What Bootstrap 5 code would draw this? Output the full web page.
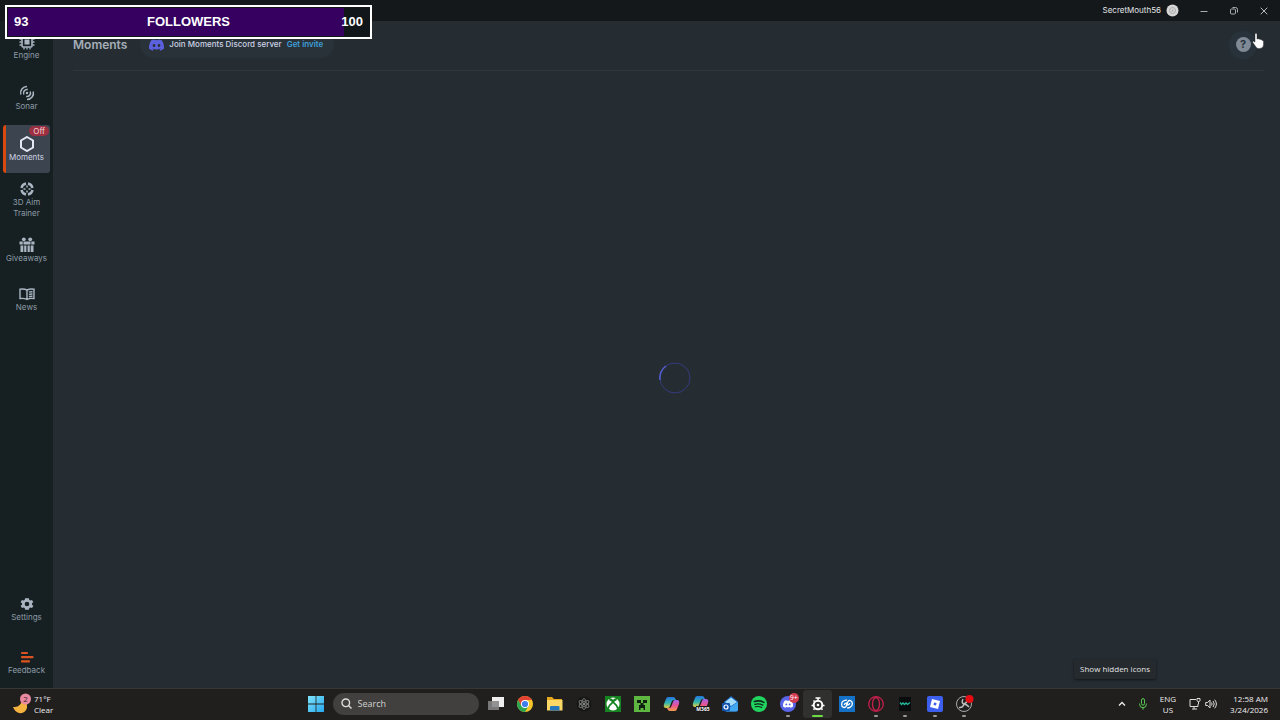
<!DOCTYPE html>
<html lang="en" data-bs-theme="dark">
<head>
<meta charset="utf-8">
<meta name="viewport" content="width=device-width, initial-scale=1">
<title>Moments</title>
<link href="https://cdn.jsdelivr.net/npm/bootstrap@5.3.0/dist/css/bootstrap.min.css" rel="stylesheet">
<style>
body{font-family:Inter,"Liberation Sans",sans-serif;background:#252d33;color:#d5d9dd;font-size:8px;line-height:11px}
button{border:0;background:none;padding:0;color:inherit}
svg{display:block;flex:none}
.titlebar{height:21px;background:#14181b;padding-right:1px}
.win-btn{width:30px;height:21px}
.account{gap:5px;margin-right:10px;color:#e2e4e6}
.sidebar{width:53px;background:#162022;padding:2px 3px;gap:3px}
.side-link{height:48px;color:#8d9aa6;text-decoration:none;text-align:center;border-radius:3px}
.side-link.compact{height:46px}
.side-link svg{color:#a9b6c2}
.side-link.active{background:#3b444f;border-left:3px solid #d9480f;color:#ced4e4;padding-right:3px}
.side-link.active svg{color:#e4e8f2}
.off-badge{top:1px;right:1px;background:#9c2f40;color:#f3d4d9;border-radius:6px;padding:0 4px;line-height:10px}
.side-end{gap:5px}
.page-head{height:50px;margin:0 16px 0 20px;padding-bottom:2px;border-bottom:1px solid #2c363f}
.page-title{font-size:12px;line-height:16px;font-weight:600;color:#a4adb7}
.invite{height:27px;border-radius:14px;background:#293139;padding:0 11px 0 9px;gap:5px;margin-left:13px;font-weight:500;color:#cdd3e4}
.invite a{color:#3f9fd6;text-decoration:none;font-weight:600}
.help{width:28px;height:28px;border-radius:50%;background:#27323b;margin-right:7px}
.help span{width:15px;height:15px;border-radius:50%;background:#808a96;color:#27313a;font-weight:700;font-size:11px;line-height:15px}
.taskbar{height:32px;padding:0 12px 2px;background:#211f1e;border-top:1px solid #363736;font-family:"Open Sans","Noto Sans",sans-serif;color:#eee}
.side-zone{flex:1 1 0}
.search{width:146px;height:22px;border-radius:11px;background:#41403e;padding:0 8px;gap:6px;margin:0 3px}
.search input{width:90px;border:0;background:none;outline:0;padding:0;color:#ddd;font-size:9px;line-height:16px}
.search input::placeholder{color:#d0d0d0;opacity:1}
.apps{display:grid;width:497px;grid-template-columns:repeat(17,1fr)}
.app-btn{height:28px;position:relative;display:flex;align-items:center;justify-content:center}
.app-btn.running::after{content:"";position:absolute;bottom:1px;width:4px;height:2px;border-radius:1px;background:#999}
.app-btn.current{background:#30302f;border-radius:3px}
.app-btn.current::after{width:11px;background:#6bdc43}
.app-count{top:3px;left:15px;width:10px;height:10px;border-radius:50%;background:#d33b50;color:#fff;font-size:7px;line-height:10px}
.tray{gap:13px}
.followers{left:5px;top:5px;width:367px;height:34px;border:2px solid #fff;background:#10161a;padding:1px;z-index:5}
.followers .progress{height:28px;border-radius:0;background:#10161a}
.followers .progress-bar{background:#35005f}
.follow-text{inset:0;padding:0 7px;display:grid;grid-template-columns:1fr auto 1fr;align-items:center;font:bold 13px/16px "Liberation Sans",Arial,sans-serif;color:#fff}
.tip{right:124px;bottom:9px;height:20px;padding:0 6px;background:#252a2e;box-shadow:0 1px 3px #0008;border-radius:2px;font-family:"Open Sans","Noto Sans",sans-serif;color:#e4e4e4;line-height:20px}
.pointer{right:16px;top:33px;z-index:6}
</style>
</head>
<body>
<div class="vh-100 d-flex flex-column position-relative overflow-hidden">
<header class="titlebar d-flex justify-content-end align-items-center">
  <div class="account d-flex align-items-center"><span>SecretMouth56</span>
    <svg width="13" height="13" viewBox="0 0 13 13"><circle cx="6.500" cy="6.500" r="6" fill="#d6d6d6"/><circle cx="6.500" cy="6.500" r="3" fill="none" stroke="#aaa"/><circle cx="6.500" cy="6.500" r="1" fill="#aaa"/></svg></div>
  <button class="win-btn d-flex align-items-center justify-content-center" aria-label="Minimize"><svg width="8" height="8" viewBox="0 0 8 8"><path d="M.5 4.500h7" stroke="#aaa"/></svg></button>
  <button class="win-btn d-flex align-items-center justify-content-center" aria-label="Restore"><svg width="8" height="8" viewBox="0 0 8 8" fill="none" stroke="#aaa"><rect x=".5" y="2" width="5" height="5" rx="1"/><path d="M2.500.5h3q2 0 2 2v3"/></svg></button>
  <button class="win-btn d-flex align-items-center justify-content-center" aria-label="Close"><svg width="8" height="8" viewBox="0 0 8 8"><path d="m.7.7 6.600 6.600m0-6.600L.7 7.300" stroke="#bbb"/></svg></button>
</header>

<div class="d-flex flex-grow-1" style="min-height:0">
<nav class="sidebar d-flex flex-column flex-shrink-0">
  <a href="#" class="side-link d-flex flex-column align-items-center justify-content-center"><svg width="16" height="16" viewBox="0 0 16 16" fill="none" stroke="currentColor"><rect x="3" y="3" width="10" height="10" rx="1" stroke-width="1.600"/><rect x="6" y="6" width="4" height="4" fill="currentColor"/><path d="M5 .5v2m3-2v2m3-2v2m-6 11v2m3-2v2m3-2v2M.5 5h2m-2 3h2m-2 3h2m11-6h2m-2 3h2m-2 3h2" stroke-width="1.300"/></svg>Engine</a>
  <a href="#" class="side-link d-flex flex-column align-items-center justify-content-center"><svg width="16" height="16" viewBox="0 0 16 16" fill="none" stroke="currentColor" stroke-width="1.500"><circle cx="8" cy="8" r="1.200" fill="currentColor" stroke="none"/><path d="M4.800 9.500a3.600 3.600 0 0 1 4-5M11.200 6.500a3.600 3.600 0 0 1-4 5M1.800 9.500A6.300 6.300 0 0 1 8 1.500M14.200 6.500A6.300 6.300 0 0 1 8 14.500"/></svg>Sonar</a>
  <a href="#" class="side-link active position-relative d-flex flex-column align-items-center justify-content-center"><svg width="16" height="16" viewBox="0 0 16 16" fill="none" stroke="currentColor" stroke-width="2"><path d="m8 1 6 3.500v7L8 15l-6-3.500v-7z"/></svg>Moments<span class="off-badge position-absolute">Off</span></a>
  <a href="#" class="side-link d-flex flex-column align-items-center justify-content-center"><svg width="16" height="16" viewBox="0 0 16 16" fill="none" stroke="currentColor"><g stroke-width="2.400"><path d="M7 2.500A5.600 5.600 0 0 0 2.500 7M9 2.500A5.600 5.600 0 0 1 13.500 7M13.500 9A5.600 5.600 0 0 1 9 13.500M7 13.500A5.600 5.600 0 0 1 2.500 9"/></g><path d="M8 4.500v2M8 9.500v2M4.500 8h2m3 0h2" stroke-width="1.500"/></svg>3D Aim<br>Trainer</a>
  <a href="#" class="side-link compact d-flex flex-column align-items-center justify-content-center"><svg width="16" height="16" viewBox="0 0 16 16" fill="currentColor"><path d="M.5 4.500h3.200v3H.5zM4.500 4.500h7v3h-7zM12.300 4.500h3.200v3h-3.200zM1.500 8.500h2.800V15H1.500zM5.200 8.500h2.200V15H5.200zM8.600 8.500h2.200V15H8.600zM11.700 8.500h2.800V15h-2.800z"/><circle cx="4.800" cy="2.300" r="1.900"/><circle cx="11.200" cy="2.300" r="1.900"/></svg>Giveaways</a>
  <a href="#" class="side-link compact d-flex flex-column align-items-center justify-content-center"><svg width="16" height="16" viewBox="0 0 16 16" fill="none" stroke="currentColor" stroke-width="1.400"><path d="M8 4Q5 2.500 1 3.200v9.300q4-.6 7 1 3-1.600 7-1V3.200Q11 2.500 8 4zm0 0v9M10 6.200q1.500-.6 3.500-.5M10 8.500q1.500-.6 3.500-.5M10 10.800q1.500-.6 3.500-.5"/></svg>News</a>
  <div class="side-end mt-auto d-flex flex-column">
  <a href="#" class="side-link d-flex flex-column align-items-center justify-content-center"><svg width="16" height="16" viewBox="0 0 24 24" fill="currentColor"><path d="M19.400 13a7.800 7.800 0 0 0 0-2l2.100-1.600-2-3.500-2.500 1a7.600 7.600 0 0 0-1.700-1L15 3.200H9l-.4 2.700a7.600 7.600 0 0 0-1.700 1l-2.500-1-2 3.500L4.600 11a7.800 7.800 0 0 0 0 2l-2.200 1.600 2 3.500 2.500-1a7.600 7.600 0 0 0 1.700 1l.4 2.700h6l.4-2.700a7.600 7.600 0 0 0 1.700-1l2.500 1 2-3.500zM12 15.500a3.500 3.500 0 1 1 0-7 3.500 3.500 0 0 1 0 7z"/></svg>Settings</a>
  <a href="#" class="side-link d-flex flex-column align-items-center justify-content-center"><svg width="16" height="16" viewBox="0 0 16 16" fill="none" stroke="#db5320" stroke-width="2.200" stroke-linecap="round"><path d="M3 4h5M3 8.200h10.500M3 12.400h7"/></svg>Feedback</a>
  </div>
</nav>

<main class="flex-grow-1 d-flex flex-column position-relative">
  <div class="page-head d-flex align-items-center">
    <h1 class="page-title m-0">Moments</h1>
    <div class="invite d-flex align-items-center"><svg width="15" height="12" viewBox="0 0 24 18" fill="#5b60dd"><path d="M20.300 1.500A20 20 0 0 0 15.400 0l-.7 1.300a18 18 0 0 0-5.400 0L8.600 0a20 20 0 0 0-4.900 1.500C.6 6.100-.3 10.600.1 15a20 20 0 0 0 6 3l1.300-2-2-1 .5-.4a14 14 0 0 0 12.200 0l.5.400-2 1 1.300 2a20 20 0 0 0 6-3c.5-5.100-.8-9.500-3.600-13.500zM8 12.300c-1.200 0-2.200-1.100-2.200-2.400S6.800 7.500 8 7.500s2.200 1.100 2.200 2.400S9.200 12.300 8 12.300zm8 0c-1.200 0-2.200-1.100-2.200-2.400s1-2.400 2.200-2.400 2.200 1.100 2.200 2.400-1 2.400-2.200 2.400z"/></svg><span>Join Moments Discord server</span><a href="#">Get invite</a></div>
    <button class="help ms-auto d-flex align-items-center justify-content-center" aria-label="Help"><span>?</span></button>
  </div>
  <div class="flex-grow-1 d-flex align-items-center justify-content-center ps-3 pb-1" role="status" aria-label="Loading"><svg width="32" height="32" viewBox="0 0 32 32" fill="none"><circle cx="16" cy="16" r="15" stroke="#343b7d"/><path d="M1 18A15 15 0 0 1 7 4" stroke="#5360d0" stroke-width="1.500"/></svg></div>
  <div class="tip position-absolute" role="tooltip">Show hidden icons</div>
</main>
</div>

<footer class="taskbar d-flex align-items-center flex-shrink-0">
  <div class="side-zone d-flex align-items-center">
    <button class="d-flex align-items-center text-start" style="gap:2px"><svg width="20" height="22" viewBox="0 0 20 22"><path d="M1 14q8 1 9-8 6 3 5 9-2 6-8 5-4-1-6-6z" fill="#f4b240"/><circle cx="13.500" cy="6" r="5.500" fill="#e9899f"/><text x="13.500" y="9" text-anchor="middle" font-size="8" fill="#48202b">2</text></svg><span>71°F<br>Clear</span></button>
  </div>
  <button class="app-btn" style="width:28px" aria-label="Start"><svg width="16" height="16" viewBox="0 0 16 16" fill="url(#win)"><defs><linearGradient id="win" gradientUnits="userSpaceOnUse" x2="16" y2="16"><stop stop-color="#7fe4fa"/><stop offset="1" stop-color="#27a7ee"/></linearGradient></defs><path d="M0 0h7.600v7.600H0zM8.400 0H16v7.600H8.400zM0 8.400h7.600V16H0zM8.400 8.400H16V16H8.400z"/></svg></button>
  <label class="search d-flex align-items-center"><svg width="11" height="11" viewBox="0 0 11 11" fill="none" stroke="#ddd" stroke-width="1.400"><circle cx="4.800" cy="4.800" r="3.800"/><path d="m7.500 7.500 3 3"/></svg><input type="text" placeholder="Search" aria-label="Search"></label>
  <div class="apps">
    <button class="app-btn" aria-label="Task view"><svg width="18" height="16" viewBox="0 0 18 16"><path d="M5 1h12v10H5z" fill="#eee"/><path d="M1 5h11v9H1z" fill="#858585" fill-opacity=".88"/></svg></button>
    <button class="app-btn" aria-label="Chrome"><svg width="16" height="16" viewBox="0 0 16 16"><circle cx="8" cy="8" r="8" fill="#f5c529"/><path d="M1.100 4A8 8 0 0 1 14.900 4H8L4.500 10z" fill="#e34133"/><path d="M1.100 4A8 8 0 0 0 8 16l3.500-6H4.500z" fill="#2da451"/><circle cx="8" cy="8" r="4" fill="#fff"/><circle cx="8" cy="8" r="3.100" fill="#3d7eea"/></svg></button>
    <button class="app-btn" aria-label="File Explorer"><svg width="17" height="16" viewBox="0 0 17 16"><path d="M1 1h5l2 2h8v11H1z" fill="#e6a91d"/><path d="M1 4h15.500v10.500H1z" fill="#fbd765"/><path d="M4 14.500V11q0-1 1-1h7.500q1 0 1 1v3.500z" fill="#2678bd"/></svg></button>
    <button class="app-btn" aria-label="Atom launcher"><svg width="16" height="16" viewBox="0 0 16 16" fill="none" stroke="#777"><circle cx="8" cy="8" r="7.500" fill="#151616" stroke="none"/><ellipse cx="8" cy="8" rx="2.200" ry="5.500"/><ellipse cx="8" cy="8" rx="2.200" ry="5.500" transform="rotate(60 8 8)"/><ellipse cx="8" cy="8" rx="2.200" ry="5.500" transform="rotate(120 8 8)"/><circle cx="8" cy="8" r="1" fill="#aaa" stroke="none"/></svg></button>
    <button class="app-btn" aria-label="Xbox"><svg width="16" height="16" viewBox="0 0 16 16"><path d="M0 0h16v16H0z" fill="#168420"/><circle cx="8" cy="8" r="6.500" fill="#fff"/><path d="M4 2.700q2 0 4 2 2-2 4-2M3 13q1-4 5-7 4 3 5 7M4.500 3.500Q6 4 8 6q2-2 3.500-2.500" fill="none" stroke="#168420" stroke-width="1.600"/></svg></button>
    <button class="app-btn" aria-label="Minecraft"><svg width="16" height="16" viewBox="0 0 16 16"><path d="M0 0h16v16H0z" fill="#5db740"/><path d="M3 4h4v3H3zm6 0h4v3H9zM6.500 7h3v2H11v5H9.500v-2h-3v2H5V9h1.500z" fill="#102010"/></svg></button>
    <button class="app-btn" aria-label="Copilot"><svg width="17" height="16" viewBox="0 0 17 16"><defs><linearGradient id="cpA" x2="0" y2="1"><stop stop-color="#2576df"/><stop offset=".55" stop-color="#31b7ad"/><stop offset="1" stop-color="#e7ce3c"/></linearGradient><linearGradient id="cpB" x2="0" y2="1"><stop stop-color="#9f65ec"/><stop offset=".5" stop-color="#e85393"/><stop offset="1" stop-color="#f29c45"/></linearGradient></defs><path d="M5 1h5q2 0 2.500 2L13 4h-2q-2 0-2.500 2L7 10q-.6 2-2 2H3q-3 0-2-4l2-5q.6-2 2-2z" fill="url(#cpA)"/><path d="M12 15H7q-2 0-2.500-2L4 12h2q2 0 2.500-2L10 6q.6-2 2-2h2q3 0 2 4l-2 5q-.6 2-2 2z" fill="url(#cpB)"/></svg></button>
    <button class="app-btn" aria-label="Microsoft 365 Copilot"><svg width="18" height="17" viewBox="0 0 18 17"><path d="M5 1h5q2 0 2.500 2L13 4h-2q-2 0-2.500 2L7 10q-.6 2-2 2H3q-3 0-2-4l2-5q.6-2 2-2z" fill="url(#cpA)"/><path d="M12 15H7q-2 0-2.500-2L4 12h2q2 0 2.500-2L10 6q.6-2 2-2h2q3 0 2 4l-2 5q-.6 2-2 2z" fill="url(#cpB)"/><path d="M4 11h14v6H4z" fill="#191919"/><text x="11" y="16" text-anchor="middle" font-size="5" font-weight="700" fill="#fff">M365</text></svg></button>
    <button class="app-btn" aria-label="Outlook"><svg width="16" height="16" viewBox="0 0 16 16"><path d="m2 6 7-6 7 5.500V14q0 1.500-2 1.500H4Q2 15.500 2 14z" fill="#1767bf"/><path d="m3 6 6-4.500L15 6l-6 4z" fill="#a3dcfa"/><path d="m16 6-9 6-3 3.500h10q2 0 2-2z" fill="#42a6f1"/><rect y="7" width="8" height="8" rx="1" fill="#1253ad"/><circle cx="4" cy="11" r="2" fill="none" stroke="#fff" stroke-width="1.200"/></svg></button>
    <button class="app-btn" aria-label="Spotify"><svg width="16" height="16" viewBox="0 0 16 16"><circle cx="8" cy="8" r="8" fill="#20d45f"/><g fill="none" stroke="#10281a" stroke-linecap="round"><path d="M3.300 5.500q5-1.500 9.600.9" stroke-width="1.600"/><path d="M3.800 8.300q4.200-1.200 8 .8" stroke-width="1.300"/><path d="M4.300 10.800q3.400-.9 6.500.7" stroke-width="1.100"/></g></svg></button>
    <button class="app-btn running" aria-label="Discord"><svg width="16" height="16" viewBox="0 0 16 16"><circle cx="8" cy="8" r="8" fill="#5865e9"/><path transform="translate(3 4.200) scale(.42)" fill="#fff" d="M20.300 1.500A20 20 0 0 0 15.400 0l-.7 1.300a18 18 0 0 0-5.400 0L8.600 0a20 20 0 0 0-4.900 1.500C.6 6.100-.3 10.600.1 15a20 20 0 0 0 6 3l1.300-2a14 14 0 0 0 9.200 0l1.300 2a20 20 0 0 0 6-3c.5-5.100-.8-9.500-3.600-13.500zM8 12.300a2.300 2.300 0 1 1 0-4.700 2.300 2.300 0 0 1 0 4.700zm8 0a2.300 2.300 0 1 1 0-4.700 2.300 2.300 0 0 1 0 4.700z"/></svg><span class="app-count position-absolute">9+</span></button>
    <button class="app-btn running current" aria-label="SteelSeries GG"><svg width="16" height="16" viewBox="0 0 16 16" fill="none" stroke="#fff"><circle cx="8" cy="9" r="4.300" stroke-width="2"/><circle cx="8" cy="9" r="1.300" fill="#fff" stroke="none"/><path d="M8 4.500V2M5.500 2h5M1.500 9.500H4m8 0h2.500M4.800 12.200l-1.300 1.600m7.700-1.600 1.300 1.600M4.800 5.800 3.500 4.500" stroke-width="1.500"/></svg></button>
    <button class="app-btn" aria-label="Link hub"><svg width="16" height="16" viewBox="0 0 16 16"><path d="M0 0h16v16H0z" fill="#1471c5"/><path d="M8 4.200Q6.500 4 5 4.700C1.800 6 2 10.500 4.500 11.400 7 12 7.500 10 7.500 8.500V7q-2 0-2.300 2M8 11.800q1.500.2 3-.5c3.200-1.300 3-5.800.5-6.700C9 4 8.500 6 8.500 7.500V9q2 0 2.300-2" fill="none" stroke="#fff" stroke-width="1.300"/></svg></button>
    <button class="app-btn running" aria-label="Opera GX"><svg width="16" height="16" viewBox="0 0 16 16" fill="none" stroke="#c51f4b" stroke-width="1.300"><circle cx="8" cy="8" r="7.300"/><ellipse cx="8" cy="8" rx="3.500" ry="6.500"/></svg></button>
    <button class="app-btn running" aria-label="Wave"><svg width="14" height="14" viewBox="0 0 14 14"><path d="M1 0h12v14H1z" fill="#080c0d"/><path d="m2 5.500 1.500 2L5 6l1.500 1.500L8 6l1.500 1.500L12 5.500" fill="none" stroke="#25b89b" stroke-width="1.300"/></svg></button>
    <button class="app-btn running" aria-label="Roblox"><svg width="16" height="16" viewBox="0 0 16 16"><rect width="16" height="16" rx="2" fill="#3c60ed"/><path fill-rule="evenodd" d="m5 3 8 2-2 8-8-2zm2 3.500-.5 2.500 2.500.6.600-2.500z" fill="#fff"/></svg></button>
    <button class="app-btn running" aria-label="OBS Studio"><svg width="20" height="20" viewBox="0 0 20 20"><circle cx="10" cy="10" r="7.500" fill="#202020" stroke="#aaa"/><path d="M9 5q-2 4 1 5 3 .5 5 3M10 10q-1 4-5 3.500M10 10q3-1 3-4" fill="none" stroke="#bbb" stroke-width="1.500"/><circle cx="15.500" cy="5" r="4" fill="#e80b12"/></svg></button>
  </div>
  <div class="side-zone tray d-flex align-items-center justify-content-end">
    <button aria-label="Show hidden icons"><svg width="8" height="6" viewBox="0 0 8 6" fill="none" stroke="#eee" stroke-width="1.300"><path d="m1 4.500 3-3 3 3"/></svg></button>
    <button aria-label="Microphone"><svg width="8" height="12" viewBox="0 0 8 12" fill="none" stroke="#5ac955"><rect x="2.500" y=".6" width="3" height="6.500" rx="1.500"/><path d="M.6 5.500v.8a3.400 3.400 0 0 0 6.800 0v-.8M4 9.700v2"/></svg></button>
    <button>ENG<br>US</button>
    <button class="d-flex align-items-center" style="gap:4px" aria-label="Network and volume"><svg width="12" height="12" viewBox="0 0 12 12" fill="none" stroke="#ddd"><path d="M7 1.500H1v7h8V6M3 11h5M5 8.500V11M8 .5v2q0 1 1.500 1T11 2.500v-2zM9.500 3.500V6"/></svg><svg width="12" height="12" viewBox="0 0 12 12" fill="none" stroke="#ddd"><path d="M.7 4.500h2L5 2v8L2.700 7.500h-2zM6.500 4.500q1.200 1.500 0 3M8 3q2.500 3 0 6M9.700 1.700q3.400 4.300 0 8.600"/></svg></button>
    <button class="text-end">12:58 AM<br>3/24/2026</button>
  </div>
</footer>

<section class="followers position-absolute" aria-label="Followers goal">
  <div class="progress" role="progressbar" aria-valuenow="93" aria-valuemin="0" aria-valuemax="100"><div class="progress-bar" style="width:93%"></div></div>
  <div class="follow-text position-absolute"><span>93</span><span>FOLLOWERS</span><span class="text-end">100</span></div>
</section>
<svg class="pointer position-absolute" width="12" height="16" viewBox="0 0 12 16"><path d="M3 1.500q0-1.200 1-1.200t1 1.200V6l1-.3q.8-.2 1 .6 1.300-.6 1.700.5 1.300-.4 1.600.7 1.200-.2 1.200 1v3q0 4-4 4H6.500q-1.500 0-2.500-1.500L.8 9.500Q.3 8.500 1.200 8.200q.9-.2 1.800 1z" fill="#fff" stroke="#222" stroke-width=".4"/></svg>
</div>
<script src="https://cdn.jsdelivr.net/npm/bootstrap@5.3.0/dist/js/bootstrap.bundle.min.js"></script>
</body>
</html>
